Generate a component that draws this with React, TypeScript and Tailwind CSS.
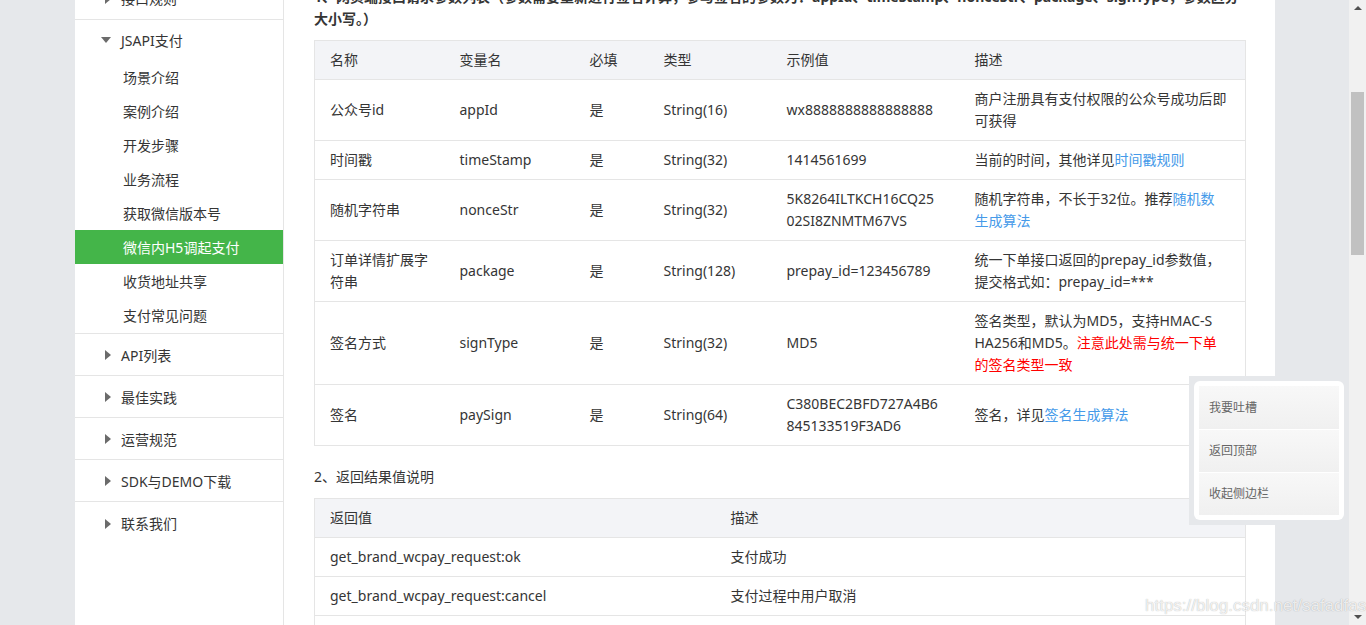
const font = "font-['Noto_Sans','Noto_Sans_CJK_SC',sans-serif]";

type Cell = React.ReactNode;

function Link({ children }: { children: React.ReactNode }) {
  return <span className="text-[#459ae9]">{children}</span>;
}

const params: Cell[][] = [
  ["公众号id", "appId", "是", "String(16)", "wx8888888888888888", "商户注册具有支付权限的公众号成功后即可获得"],
  ["时间戳", "timeStamp", "是", "String(32)", "1414561699", <>当前的时间，其他详见<Link>时间戳规则</Link></>],
  [
    "随机字符串",
    "nonceStr",
    "是",
    "String(32)",
    <>5K8264ILTKCH16CQ25<br />02SI8ZNMTM67VS</>,
    <>随机字符串，不长于32位。推荐<Link>随机数<br />生成算法</Link></>,
  ],
  ["订单详情扩展字符串", "package", "是", "String(128)", "prepay_id=123456789", "统一下单接口返回的prepay_id参数值，提交格式如：prepay_id=***"],
  [
    "签名方式",
    "signType",
    "是",
    "String(32)",
    "MD5",
    <>
      签名类型，默认为MD5，支持HMAC-S
      <br />
      HA256和MD5。<span className="text-[#ff0000]">注意此处需与统一下单<br />的签名类型一致</span>
    </>,
  ],
  [
    "签名",
    "paySign",
    "是",
    "String(64)",
    <>C380BEC2BFD727A4B6<br />845133519F3AD6</>,
    <>签名，详见<Link>签名生成算法</Link></>,
  ],
];

const results = [
  ["get_brand_wcpay_request:ok", "支付成功"],
  ["get_brand_wcpay_request:cancel", "支付过程中用户取消"],
  ["get_brand_wcpay_request:fail", "支付失败"],
];

const subItems = ["场景介绍", "案例介绍", "开发步骤", "业务流程", "获取微信版本号", "微信内H5调起支付", "收货地址共享", "支付常见问题"];
const groups = ["API列表", "最佳实践", "运营规范", "SDK与DEMO下载", "联系我们"];

function RightArrow() {
  return (
    <span className="flex w-[10px] justify-end">
      <span className="h-0 w-0 border-y-[5px] border-l-[6px] border-y-transparent border-l-[#6b6b6b]" />
    </span>
  );
}

function Sidebar() {
  return (
    <aside className="w-[209px] shrink-0 border-r border-[#e5e5e5] bg-white text-[14px] text-[#353535]">
      <div className="-mt-[22px]">
        <div className="flex h-[42px] items-center border-b border-[#e5e5e5] pl-[26px]">
          <RightArrow />
          <span className="ml-[10px]">接口规则</span>
        </div>
        <div className="border-b border-[#e5e5e5] pb-[1px]">
          <div className="flex h-[40px] items-center pl-[26px]">
            <span className="h-0 w-0 border-x-[5px] border-t-[6px] border-x-transparent border-t-[#6b6b6b]" />
            <span className="ml-[10px]">JSAPI支付</span>
          </div>
          {subItems.map((s) => (
            <div
              key={s}
              className={
                s === "微信内H5调起支付"
                  ? "flex h-[34px] items-center bg-[#44b549] pl-[48px] text-white"
                  : "flex h-[34px] items-center pl-[48px]"
              }
            >
              {s}
            </div>
          ))}
        </div>
        {groups.map((g, i) => (
          <div
            key={g}
            className={
              i < groups.length - 1
                ? "flex h-[42px] items-center border-b border-[#e5e5e5] pl-[26px] pt-[1px]"
                : "flex h-[42px] items-center pl-[26px] pt-[1px]"
            }
          >
            <RightArrow />
            <span className="ml-[10px]">{g}</span>
          </div>
        ))}
      </div>
    </aside>
  );
}

function Content() {
  return (
    <main className="w-[991px] shrink-0 bg-white px-[30px] text-[14px] leading-[22px] text-[#353535]">
      <p className="-mt-[14px] font-bold">
        1、网页端接口请求参数列表（参数需要重新进行签名计算，参与签名的参数为：appId、timeStamp、nonceStr、package、signType，参数区分
        <br />
        大小写。）
      </p>

      {/* 请求参数 */}
      <table className="mt-[10px] w-[931px] table-fixed border-collapse border border-[#e5e5e5]">
        <colgroup>
          <col className="w-[130px]" />
          <col className="w-[130px]" />
          <col className="w-[74px]" />
          <col className="w-[123px]" />
          <col className="w-[188px]" />
          <col className="w-[286px]" />
        </colgroup>
        <thead>
          <tr className="bg-[#f3f4f7]">
            {["名称", "变量名", "必填", "类型", "示例值", "描述"].map((h) => (
              <th key={h} className="border-y border-[#e5e5e5] py-2 pl-[15px] pr-3 text-left font-normal">
                {h}
              </th>
            ))}
          </tr>
        </thead>
        <tbody>
          {params.map((row, i) => (
            <tr key={i}>
              {row.map((c, j) => (
                <td key={j} className="border-y border-[#e5e5e5] py-2 pl-[15px] pr-3 align-middle break-all">
                  {c}
                </td>
              ))}
            </tr>
          ))}
        </tbody>
      </table>

      <p className="mt-[20px]">2、返回结果值说明</p>

      {/* 返回结果 */}
      <table className="mt-[10px] w-[931px] table-fixed border-collapse border border-[#e5e5e5]">
        <colgroup>
          <col className="w-[401px]" />
          <col className="w-[530px]" />
        </colgroup>
        <thead>
          <tr className="bg-[#f3f4f7]">
            <th className="border-y border-[#e5e5e5] py-2 pl-[15px] pr-3 text-left font-normal">返回值</th>
            <th className="border-y border-[#e5e5e5] py-2 pl-[15px] pr-3 text-left font-normal">描述</th>
          </tr>
        </thead>
        <tbody>
          {results.map(([a, b]) => (
            <tr key={a}>
              <td className="border-y border-[#e5e5e5] py-2 pl-[15px] pr-3">{a}</td>
              <td className="border-y border-[#e5e5e5] py-2 pl-[15px] pr-3">{b}</td>
            </tr>
          ))}
        </tbody>
      </table>
    </main>
  );
}

function Scrollbar() {
  return (
    <div className="flex w-[17px] shrink-0 flex-col items-center bg-[#f1f1f1]">
      <span className="mt-[6px] h-0 w-0 border-x-[4px] border-b-[4px] border-x-transparent border-b-[#505050]" />
      <div className="mt-[82px] h-[163px] w-[13px] bg-[#c1c1c1]" />
      <div className="flex-1" />
      <span className="mb-[6px] h-0 w-0 border-x-[4px] border-t-[4px] border-x-transparent border-t-[#505050]" />
    </div>
  );
}

function FloatPanel() {
  return (
    <div className="absolute left-[1189px] top-[376px] bg-[#e6e8eb] p-[5px]">
      <div className="w-[150px] rounded-[6px] bg-white p-[5px]">
        {["我要吐槽", "返回顶部", "收起侧边栏"].map((t, i) => (
          <div
            key={t}
            className={
              (i > 0 ? "border-t border-white " : "") +
              "flex h-[43px] items-center bg-gradient-to-b from-[#f8f8f8] to-[#f0f0f0] pl-[10px] text-[12px] text-[#666]"
            }
          >
            {t}
          </div>
        ))}
      </div>
    </div>
  );
}

export default function App() {
  return (
    <div className={`relative flex h-[625px] w-[1366px] overflow-hidden bg-[#e6e8eb] ${font}`}>
      <div className="w-[75px] shrink-0" />
      <Sidebar />
      <Content />
      <div className="flex-1" />
      <Scrollbar />
      <FloatPanel />
      <div className="absolute left-[1145px] top-[595px] font-['Liberation_Sans',sans-serif] text-[17px] leading-[22px] text-white/80 [text-shadow:0_0_1px_rgba(0,0,0,0.35)]">
        https://blog.csdn.net/safadfasd
      </div>
    </div>
  );
}
